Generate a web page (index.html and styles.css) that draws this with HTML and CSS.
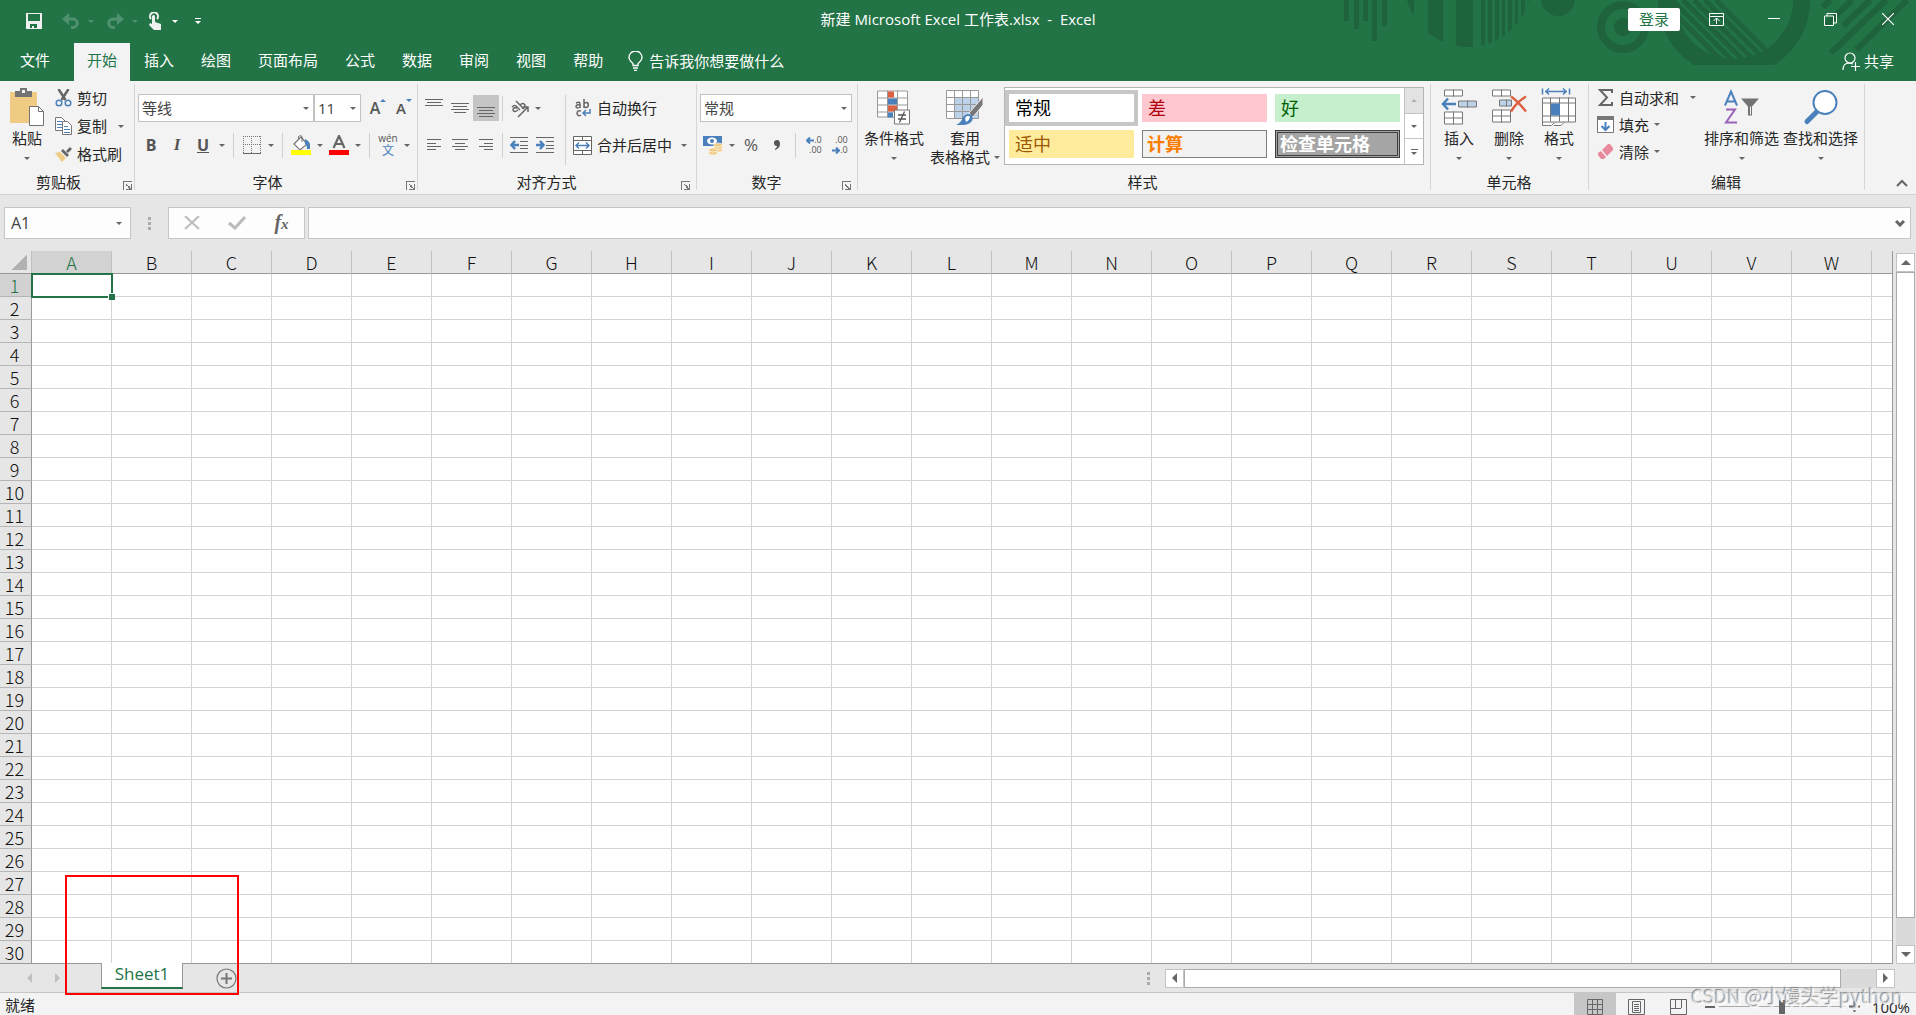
FILE: index.html
```html
<!DOCTYPE html>
<html lang="zh-CN">
<head>
<meta charset="utf-8">
<title>新建 Microsoft Excel 工作表.xlsx - Excel</title>
<link rel="stylesheet" href="styles.css">
</head>
<body>
<header class="top">
  <svg class="deco" width="596" height="81" viewBox="0 0 596 81" aria-hidden="true">
    <defs>
      <clipPath id="disc"><circle cx="148" cy="-16" r="63"/></clipPath>
      <clipPath id="bowl"><circle cx="414" cy="0" r="59"/></clipPath>
    </defs>
    <g fill="#1e633c">
      <path d="M24 0h5v21h-5zM34 0h5v29h-5zM43 0h5v21h-5zM52 0h5v41h-5zM62 0h5v26h-5z"/>
      <path clip-path="url(#disc)" d="M85 0h9v60h-9zM108 0h15v60h-15zM136 0h17v60h-17zM161 0h4v60h-4zM168 0h4v60h-4zM175 0h4v60h-4zM182 0h3v60h-3zM188 0h4v60h-4zM195 0h3v60h-3zM201 0h4v60h-4zM208 0h4v60h-4z"/>
      <circle cx="238" cy="-1" r="17"/>
      <circle cx="303" cy="27" r="22" fill="none" stroke="#1e633c" stroke-width="8"/>
      <circle cx="303" cy="27" r="9"/>
      <path d="M338 0a76 76 0 0 0 36 65h80a76 76 0 0 0 36-65h-17a59 59 0 0 1-118 0z"/>
    </g>
    <g stroke="#1e633c" fill="none">
      <path clip-path="url(#bowl)" stroke-width="5" d="M396 0l70 70M385 0l70 70M374 0l70 70M363 0l70 70M352 0l70 70M341 0l70 70"/>
      <path stroke-width="6" d="M503 7l7-7M505 26l27-26M523 26l27-26M511 53l55-53M536 50l51-50"/>
    </g>
  </svg>
  <div class="titlebar">
    <div class="qat">
      <button class="q save" aria-label="保存"><svg width="16" height="16" viewBox="0 0 16 16"><path fill="#f0f0f0" fill-rule="evenodd" d="M0 0h16v16H0zM2 1v7h12V1zM4 11v4h2v-2h2v2h3v-4z"/></svg></button>
      <button class="q dim" aria-label="撤消"><svg width="18" height="16" viewBox="0 0 18 16"><path fill="none" stroke="currentColor" stroke-width="3" d="M3 6h8a4 4 0 0 1 0 8.500H9"/><path fill="currentColor" d="M0 6l7-6v12z"/></svg></button>
      <button class="drop dim" aria-label="撤消列表"></button>
      <button class="q dim redo" aria-label="恢复"><svg width="18" height="16" viewBox="0 0 18 16"><path fill="none" stroke="currentColor" stroke-width="3" d="M15 6H7a4 4 0 0 0 0 8.500h2"/><path fill="currentColor" d="M18 6l-7-6v12z"/></svg></button>
      <button class="drop dim" aria-label="恢复列表"></button>
      <button class="q" aria-label="触摸模式"><svg width="14" height="18" viewBox="0 0 14 18"><path fill="none" stroke="#f0f0f0" stroke-width="2" d="M3 7a4 4 0 1 1 6 0"/><path fill="#f0f0f0" d="M4 4q2-2 3 0v6l6 2v6H6l-5-5 1-2 2 1z"/></svg></button>
      <button class="drop light" aria-label="触摸模式列表"></button>
      <button class="q custom" aria-label="自定义快速访问工具栏"><svg width="6" height="6" viewBox="0 0 6 6"><path fill="#fff" d="M0 0h6v1H0zM0 3h6L3 6z"/></svg></button>
    </div>
    <h1 class="doc-title">新建 Microsoft Excel 工作表.xlsx&nbsp; -&nbsp; Excel</h1>
    <div class="window-tools">
      <button class="login">登录</button>
      <button class="win" aria-label="功能区显示选项"><svg width="15" height="13" viewBox="0 0 15 13"><path fill="none" stroke="#fff" d="M.5.5h14v12H.5zM1 3.500h13M7.500 11V5M4.500 8l3-3 3 3"/></svg></button>
      <button class="win" aria-label="最小化"><svg width="12" height="12" viewBox="0 0 12 12"><path stroke="#fff" d="M0 5.500h12"/></svg></button>
      <button class="win" aria-label="还原"><svg width="13" height="13" viewBox="0 0 13 13"><path fill="none" stroke="#fff" d="M.5 3h9v9.500h-9zM3 3V.5h9.500V10H10"/></svg></button>
      <button class="win" aria-label="关闭"><svg width="12" height="12" viewBox="0 0 12 12"><path stroke="#fff" stroke-width="1.200" d="M0 0l12 12M12 0L0 12"/></svg></button>
    </div>
  </div>
  <nav class="tabs">
    <button class="tab file">文件</button>
    <button class="tab active">开始</button>
    <button class="tab">插入</button>
    <button class="tab">绘图</button>
    <button class="tab">页面布局</button>
    <button class="tab">公式</button>
    <button class="tab">数据</button>
    <button class="tab">审阅</button>
    <button class="tab">视图</button>
    <button class="tab">帮助</button>
    <button class="tell"><svg width="15" height="20" viewBox="0 0 15 20"><path fill="none" stroke="#fff" stroke-width="1.300" d="M5 14.500v-2Q1 9 1 6.500a6 6 0 0 1 13 0Q14 9 10 12.500v2zM5 17h5M6 19.300h3"/></svg>告诉我你想要做什么</button>
    <button class="share"><svg width="18" height="19" viewBox="0 0 18 19"><circle cx="8" cy="6" r="5" fill="none" stroke="#fff" stroke-width="1.200"/><path fill="none" stroke="#fff" stroke-width="1.200" d="M1 18c0-4 2-7 6-7l4 1M13.500 10v9M9 14.500h9"/></svg>共享</button>
  </nav>
</header>

<main class="ribbon">
  <section class="group clipboard">
    <div class="tools">
      <button class="big paste"><svg width="35" height="39" viewBox="0 0 35 39"><path fill="#f0cb83" d="M0 4h27v31H0z"/><path fill="#737373" d="M5 3h5V0h7v3h5v6H5z"/><path fill="#f3f3f3" d="M12 2h3v3h-3z"/><path fill="#fff" stroke="#737373" d="M19.500 18.500h9l5 5v14h-14z"/><path fill="none" stroke="#737373" d="M28.500 18.500v5h5"/></svg><span>粘贴</span><i class="caret"></i></button>
      <div class="list">
        <button class="line"><svg width="16" height="18" viewBox="0 0 16 18"><path stroke="#666" stroke-width="2.500" d="M3 0l7 11M13 0L6 11"/><circle cx="3.500" cy="14" r="2.800" fill="none" stroke="#4a80bb" stroke-width="1.500"/><circle cx="12.500" cy="14" r="2.800" fill="none" stroke="#4a80bb" stroke-width="1.500"/></svg>剪切</button>
        <button class="line"><svg width="17" height="18" viewBox="0 0 17 18"><path fill="#fff" stroke="#777" d="M.5.500h6l4 4v9H.5z"/><path stroke="#4a80bb" d="M2 4.500h5M2 7.500h5M2 10.500h5"/><path fill="#fff" stroke="#777" d="M7.500 4.500h5l4 4v9h-9z"/><path stroke="#4a80bb" d="M9 9.500h4M9 12.500h6M9 15.500h6"/></svg>复制<i class="caret far"></i></button>
        <button class="line"><svg width="17" height="15" viewBox="0 0 17 15"><path fill="#f0cb83" d="M0 6l5-1 6 6-4 4z"/><path fill="#666" d="M6 4l2-2 6 6-2 2zM11 4l4-4 2 2-4 4z"/></svg>格式刷</button>
      </div>
    </div>
    <footer class="cap launcher"><span>剪贴板</span><button class="launch" aria-label="剪贴板选项"></button></footer>
  </section>

  <section class="group fonts">
    <div class="tools stack">
      <div class="row">
        <label class="combo font"><select aria-label="字体"><option>等线</option></select></label>
        <label class="combo size"><select aria-label="字号"><option>11</option></select></label>
        <button class="tool grow" aria-label="增大字号"><b class="glyph">A</b><svg width="6" height="12" viewBox="0 0 6 12"><path fill="#4a80bb" d="M0 3h6L3 0z"/></svg></button>
        <button class="tool" aria-label="减小字号"><b class="glyph small">A</b><svg width="6" height="12" viewBox="0 0 6 12"><path fill="#4a80bb" d="M0 0h6L3 3z"/></svg></button>
      </div>
      <div class="row">
        <button class="tool fmt"><b>B</b></button>
        <button class="tool fmt"><em>I</em></button>
        <button class="tool fmt"><u>U</u></button>
        <button class="drop" aria-label="下划线选项"></button>
        <span class="sep"></span>
        <button class="tool" aria-label="边框"><svg width="18" height="18" viewBox="0 0 18 18"><path stroke="#777" stroke-dasharray="1 1" fill="none" d="M.5 0v17M8.500 0v17M17.500 0v17M0 .5h18M0 8.500h18"/><path stroke="#666" d="M0 17.500h18"/></svg></button>
        <button class="drop" aria-label="边框选项"></button>
        <span class="sep"></span>
        <button class="tool" aria-label="填充颜色"><svg width="20" height="20" viewBox="0 0 20 20"><path fill="#fff" stroke="#777" stroke-width="1.200" d="M3 9l7-7 6 7-7 6z"/><path fill="none" stroke="#777" d="M7.500 5V1.500q2-2 3.500 0V7"/><path fill="#4a80bb" d="M14 4q6 2 5 10h-3q0-4-2-5z"/><path fill="#ff0" d="M0 15h20v5H0z"/></svg></button>
        <button class="drop" aria-label="填充颜色选项"></button>
        <button class="tool" aria-label="字体颜色"><svg width="20" height="20" viewBox="0 0 20 20"><path fill="none" stroke="#666" stroke-width="2.200" d="M4.500 13L10 1l5.500 12M7 9h6"/><path fill="red" d="M0 15h20v5H0z"/></svg></button>
        <button class="drop" aria-label="字体颜色选项"></button>
        <span class="sep"></span>
        <button class="tool pinyin"><span>wén</span><span class="wen">文</span></button>
        <button class="drop" aria-label="拼音选项"></button>
      </div>
    </div>
    <footer class="cap launcher"><span>字体</span><button class="launch" aria-label="字体选项"></button></footer>
  </section>

  <section class="group">
    <div class="tools align">
      <div class="stack">
        <div class="row">
          <button class="tool" aria-label="顶端对齐"><svg width="18" height="18" viewBox="0 0 18 18"><path stroke="#666" d="M0 .5h18M2 3.500h14M0 6.500h18"/></svg></button>
          <button class="tool" aria-label="垂直居中"><svg width="18" height="18" viewBox="0 0 18 18"><path stroke="#666" d="M0 4.500h18M2 7.500h14M0 10.500h18M3 13.500h12"/></svg></button>
          <button class="tool pressed" aria-label="底端对齐"><svg width="18" height="18" viewBox="0 0 18 18"><path stroke="#666" d="M0 8.500h18M2 11.500h14M0 14.500h18M2 17.500h14"/></svg></button>
          <span class="sep tight"></span>
          <button class="tool" aria-label="方向"><svg width="19" height="19" viewBox="0 0 19 19"><g fill="none" stroke="#666" stroke-width="1.500"><path d="M2 8q3-3 5 0l3 3M7 9q-4-1-4 2 1 3 5 0M6 2l8 8M10 6q3-3 5 0 0 4-3 3"/><path d="M8 18L18 8M18 13V8h-5"/></g></svg></button>
          <button class="drop" aria-label="方向选项"></button>
        </div>
        <div class="row">
          <button class="tool" aria-label="左对齐"><svg width="14" height="12" viewBox="0 0 14 12"><path stroke="#666" d="M0 .5h14M0 4.500h9M0 7.500h14M0 10.500h9"/></svg></button>
          <button class="tool" aria-label="居中"><svg width="16" height="12" viewBox="0 0 16 12"><path stroke="#666" d="M0 .5h16M3 4.500h10M0 7.500h16M3 10.500h10"/></svg></button>
          <button class="tool" aria-label="右对齐"><svg width="14" height="12" viewBox="0 0 14 12"><path stroke="#666" d="M0 .5h14M5 4.500h9M0 7.500h14M5 10.500h9"/></svg></button>
          <span class="sep tight"></span>
          <button class="tool" aria-label="减少缩进"><svg width="18" height="16" viewBox="0 0 18 16"><path stroke="#666" d="M0 .5h18M10 4.500h8M10 8.500h8M10 11.500h8M0 15.500h18"/><path fill="none" stroke="#4a80bb" stroke-width="2.500" d="M9 8H2M5 4L1.500 8 5 12"/></svg></button>
          <button class="tool" aria-label="增加缩进"><svg width="18" height="16" viewBox="0 0 18 16"><path stroke="#666" d="M0 .5h18M10 4.500h8M10 8.500h8M10 11.500h8M0 15.500h18"/><path fill="none" stroke="#4a80bb" stroke-width="2.500" d="M0 8h7M4 4l3.500 4L4 12"/></svg></button>
        </div>
      </div>
      <span class="sep long"></span>
      <div class="stack">
        <button class="line wide"><svg width="19" height="18" viewBox="0 0 19 18"><g fill="none" stroke="#666" stroke-width="1.500"><path d="M3 4q4-2 4 1v4M7 6q-4-1-4 2 1 2 4 0M11 0v9M11 5q1-2 3-1.500 2 1 1 4-2 2-4 0M8 12q-4-1-4 2.500Q5 18 8 16"/></g><path fill="none" stroke="#4a80bb" stroke-width="1.500" d="M17 10v4h-6M13 11l-3 3 3 3"/></svg>自动换行</button>
        <button class="line wide"><svg width="19" height="19" viewBox="0 0 19 19"><path fill="#fff" stroke="#666" d="M.5.500h18v18H.5zM.5 4.500h18M.5 14.500h18M9.500 0v4M9.500 15v4"/><path fill="none" stroke="#4a80bb" stroke-width="1.500" d="M3 9.500h13M6 6.500l-3 3 3 3M13 6.500l3 3-3 3"/></svg>合并后居中<i class="caret far"></i></button>
      </div>
    </div>
    <footer class="cap launcher"><span>对齐方式</span><button class="launch" aria-label="对齐选项"></button></footer>
  </section>

  <section class="group">
    <div class="tools stack">
      <div class="row"><label class="combo number"><select aria-label="数字格式"><option>常规</option></select></label></div>
      <div class="row">
        <button class="tool" aria-label="会计数字格式"><svg width="20" height="19" viewBox="0 0 20 19"><path fill="#4a80bb" d="M0 0h19v10H0z"/><ellipse cx="9" cy="5" rx="5" ry="3.500" fill="#fff"/><circle cx="9" cy="5" r="2" fill="#4a80bb"/><g fill="#f0cb83" stroke="#fff" stroke-width=".6"><ellipse cx="15" cy="14" rx="4.500" ry="2"/><ellipse cx="15" cy="11.500" rx="4.500" ry="2"/><ellipse cx="15" cy="9" rx="4.500" ry="2"/><ellipse cx="10" cy="17" rx="4.500" ry="2"/><ellipse cx="10" cy="14" rx="4.500" ry="2"/></g></svg></button>
        <button class="drop" aria-label="会计格式选项"></button>
        <button class="tool percent">%</button>
        <button class="tool" aria-label="千位分隔样式"><svg width="6" height="10" viewBox="0 0 6 10"><path fill="#555" d="M3 0q3 0 3 4 0 4-5 6V9q2-1 2-3-3 0-3-3 0-3 3-3z"/></svg></button>
        <span class="sep"></span>
        <button class="tool" aria-label="增加小数位数"><span class="dec"><span><svg width="8" height="7" viewBox="0 0 8 7"><path fill="none" stroke="#4a80bb" stroke-width="2" d="M8 3.500H2M4 .500l-3 3 3 3"/></svg>.0</span><span>.00</span></span></button>
        <button class="tool" aria-label="减少小数位数"><span class="dec"><span>.00</span><span><svg width="8" height="7" viewBox="0 0 8 7"><path fill="none" stroke="#4a80bb" stroke-width="2" d="M0 3.500h6M4 .500l3 3-3 3"/></svg>.0</span></span></button>
      </div>
    </div>
    <footer class="cap launcher"><span>数字</span><button class="launch" aria-label="数字选项"></button></footer>
  </section>

  <section class="group styles">
    <div class="tools">
      <button class="big cond"><svg width="34" height="34" viewBox="0 0 34 34"><path fill="#fff" stroke="#999" d="M.5.500h30v26H.5zM10.500 0v27M20.500 0v27M0 7.500h31M0 14.500h31M0 21.500h31"/><path fill="#dc6141" d="M11 1h6v6h-6zM11 15h9v6h-9z"/><path fill="#4a80bb" d="M11 8h9v6h-9zM11 22h5v5h-5z"/><path fill="#fff" stroke="#777" d="M17.500 19.500h15v14h-15z"/><path fill="none" stroke="#555" stroke-width="1.300" d="M21 24.500h8M21 28.500h8M27.500 21l-5 11"/></svg><span>条件格式</span><i class="caret"></i></button>
      <button class="big tablefmt"><svg width="38" height="35" viewBox="0 0 38 35"><path fill="#fff" d="M0 0h33v28H0z"/><path fill="#bdd1e9" d="M8 7h25v21H8z"/><path fill="none" stroke="#999" d="M.5.500h32v28H.5zM8.500 0v28M16.500 0v28M24.500 0v28M0 7.500h33M0 14.500h33M0 21.500h33"/><path fill="#777" stroke="#f3f3f3" d="M37 7v8L27 27l-4-4z"/><path fill="#4a80bb" d="M10 35q5-2 7-8 4-5 9-2 3 8-8 10z"/><path fill="#fff" d="M19 28q3-4 5-1-1 4-4 5z"/></svg><span>套用</span><span class="second">表格格式<i class="caret"></i></span></button>
      <div class="gallery">
        <div class="swatches">
          <button class="sw normal">常规</button><button class="sw bad">差</button><button class="sw good">好</button>
          <button class="sw neutral">适中</button><button class="sw calc">计算</button><button class="sw check">检查单元格</button>
        </div>
        <div class="updown">
          <button class="off" aria-label="上一行"><i class="caret up"></i></button>
          <button aria-label="下一行"><i class="caret"></i></button>
          <button class="more" aria-label="其他样式"><i class="caret"></i></button>
        </div>
      </div>
    </div>
    <footer class="cap"><span>样式</span></footer>
  </section>

  <section class="group">
    <div class="tools cells">
      <button class="big"><svg width="36" height="36" viewBox="0 0 36 36"><g fill="#fff" stroke="#777"><path d="M3.500.500h18v6h-18zM12.500 0v7M3.500 22.500h18v12h-18zM12.500 22v13M3 28.500h19"/><path fill="#bdd1e9" d="M17.500 11.500h18v6h-18zM26.500 11v7"/></g><path fill="none" stroke="#4a80bb" stroke-width="2.500" d="M15 14.500H2M7 9l-5 5.500L7 20"/></svg><span>插入</span><i class="caret"></i></button>
      <button class="big"><svg width="36" height="36" viewBox="0 0 36 36"><g fill="#fff" stroke="#777"><path d="M1.500.500h18v6h-18zM10.500 0v7M1.500 20.500h18v12h-18zM10.500 20v13M1 26.500h19"/><path fill="#bdd1e9" d="M8.500 10.500h12v6h-12zM15.500 10v7"/></g><path fill="none" stroke="#dc6141" stroke-width="2.500" d="M20 7q6 4 15 15M35 7Q26 12 20 22"/></svg><span>删除</span><i class="caret"></i></button>
      <button class="big"><svg width="36" height="38" viewBox="0 0 36 38"><path fill="none" stroke="#4a80bb" stroke-width="1.500" d="M1.500 0v6M28.500 0v6M4 3h22M8 0L5 3l3 3M22 0l3 3-3 3"/><path fill="#fff" stroke="#777" d="M1.500 9.500h33v24h-33zM9.500 9v24M18.500 9v24M27.500 9v24M1 14.500h34M1 27.500h34M1.500 33v4h9l3-3M13 37h7l3-3"/><path fill="#4a80bb" d="M10 15h9v12h-9z"/></svg><span>格式</span><i class="caret"></i></button>
    </div>
    <footer class="cap"><span>单元格</span></footer>
  </section>

  <section class="group">
    <div class="tools">
      <div class="list edit">
        <button class="line"><svg width="17" height="17" viewBox="0 0 17 17"><path fill="none" stroke="#666" stroke-width="2" d="M15 4V1H3l7 7.500L3 16h12v-3"/></svg>自动求和<i class="caret far"></i></button>
        <button class="line"><svg width="17" height="17" viewBox="0 0 17 17"><path fill="#fff" stroke="#777" d="M.5.500h16v16H.5z"/><path fill="#777" d="M0 0h17v4H0z"/><path fill="none" stroke="#4a80bb" stroke-width="2" d="M8.500 6v8M4.500 10l4 4 4-4"/></svg>填充<i class="caret"></i></button>
        <button class="line"><svg width="17" height="16" viewBox="0 0 17 16"><path fill="#e98a9c" d="M5 6l6-6h2l3 4v2l-6 6zM4 7l5 6-2 2H4l-3-4v-2z"/></svg>清除<i class="caret"></i></button>
      </div>
      <button class="big sort"><svg width="36" height="34" viewBox="0 0 36 34"><path fill="none" stroke="#4a80bb" stroke-width="2" d="M1 15L7 1l6 14M3 11h8"/><path fill="none" stroke="#9b62b8" stroke-width="2" d="M2 19h9L2 32h11"/><path fill="#737373" d="M17 8h18l-7 8v9h-4v-9z"/><path stroke="#f3f3f3" d="M26.500 16v8"/></svg><span>排序和筛选</span><i class="caret"></i></button>
      <button class="big find"><svg width="36" height="36" viewBox="0 0 36 36"><path stroke="#4a80bb" stroke-width="5" stroke-linecap="round" d="M4 32l11-11"/><circle cx="22" cy="13" r="11.500" fill="#fff" stroke="#4a80bb" stroke-width="2"/></svg><span>查找和选择</span><i class="caret"></i></button>
    </div>
    <footer class="cap"><span>编辑</span></footer>
  </section>
  <button class="collapse" aria-label="折叠功能区"><svg width="12" height="8" viewBox="0 0 12 8"><path fill="none" stroke="#666" stroke-width="2" d="M1 7l5-5 5 5"/></svg></button>
</main>

<div class="formula">
  <label class="namebox"><input value="A1" aria-label="名称框"><i class="caret"></i></label>
  <span class="dots"></span>
  <div class="fx">
    <button aria-label="取消"><svg width="16" height="14" viewBox="0 0 16 14"><path stroke="#bbb" stroke-width="2" d="M1 0l14 13M15 0L1 13"/></svg></button>
    <button aria-label="输入"><svg width="18" height="14" viewBox="0 0 18 14"><path fill="none" stroke="#bbb" stroke-width="3" d="M1 7l6 5L17 1"/></svg></button>
    <button aria-label="插入函数"><em>f<small>x</small></em></button>
  </div>
  <label class="entry"><input aria-label="编辑栏"><svg width="10" height="7" viewBox="0 0 10 7"><path fill="none" stroke="#666" stroke-width="3" d="M1 1l4 4 4-4"/></svg></label>
</div>

<div class="work">
  <div class="sheet"><table class="grid" id="grid"></table></div>
  <div class="vbar">
    <button class="arrow" aria-label="向上滚动"><i class="tri up"></i></button>
    <div class="track"><div class="thumb"></div></div>
    <button class="arrow" aria-label="向下滚动"><i class="tri down"></i></button>
  </div>
</div>

<div class="sheetbar">
  <button class="nav" aria-label="上一个工作表"><i class="tri left"></i></button>
  <button class="nav" aria-label="下一个工作表"><i class="tri right"></i></button>
  <button class="sheet-tab">Sheet1</button>
  <button class="add" aria-label="新工作表"><svg width="21" height="21" viewBox="0 0 21 21"><circle cx="10.500" cy="10.500" r="9.500" fill="none" stroke="#777" stroke-width="1.200"/><path stroke="#777" stroke-width="2" d="M5 10.500h11M10.500 5v11"/></svg></button>
  <div class="hbar">
    <span class="dots"></span>
    <button class="arrow" aria-label="向左滚动"><i class="tri left"></i></button>
    <div class="track"><div class="thumb"></div></div>
    <button class="arrow" aria-label="向右滚动"><i class="tri right"></i></button>
  </div>
  <div class="mark"></div>
</div>

<footer class="status">
  <span class="ready">就绪</span>
  <button class="view on" aria-label="普通"><svg width="16" height="16" viewBox="0 0 16 16"><path fill="none" stroke="#666" d="M.5.500h15v15H.5zM5.500 0v16M10.500 0v16M0 5.500h16M0 10.500h16"/></svg></button>
  <button class="view" aria-label="页面布局"><svg width="17" height="16" viewBox="0 0 17 16"><path fill="none" stroke="#666" d="M.5.500h16v15H.5zM4.500 2.500h8v11h-8zM6 5.500h5M6 7.500h5M6 9.500h5M6 11.500h5"/></svg></button>
  <button class="view" aria-label="分页预览"><svg width="17" height="16" viewBox="0 0 17 16"><path fill="none" stroke="#666" d="M.5.500h16v15H.5zM5.500 0v9M11.500 0v9M0 9.500h11"/></svg></button>
  <div class="zoom">
    <button class="minus" aria-label="缩小"></button>
    <input type="range" min="0" max="200" value="100" aria-label="缩放">
    <button class="plus" aria-label="放大"><svg width="11" height="11" viewBox="0 0 11 11"><path stroke="#666" stroke-width="2" d="M0 5.500h11M5.500 0v11"/></svg></button>
    <span>100%</span>
  </div>
  <span class="watermark">CSDN @小馒头学python</span>
</footer>
<script src="grid.js"></script>
</body>
</html>
```
FILE: styles.css
```css
* { box-sizing: border-box; }
body {
  margin: 0;
  height: 100vh;
  display: flex;
  flex-direction: column;
  overflow: hidden;
  background: #e6e6e6;
  color: #262626;
  font: 15px/20px "Open Sans", "Noto Sans CJK SC", sans-serif;
}
button, input, select { font: inherit; color: inherit; margin: 0; }
button { border: 0; padding: 0; background: none; white-space: nowrap; }
svg { display: block; flex: none; }
i { display: block; flex: none; }

/* title bar and tabs */
.top { position: relative; background: #227447; color: #fff; flex: none; }
.deco { position: absolute; right: 0; top: 0; }
.titlebar { position: relative; display: grid; grid-template-columns: 1fr auto 1fr; height: 43px; padding-bottom: 5px; align-items: center; }
.qat { display: flex; align-items: center; height: 38px; padding: 4px 0 0 20px; }
.q { width: 28px; height: 24px; display: flex; align-items: center; justify-content: center; }
.q.save { margin-right: 9px; }
.q.redo { margin-left: 4px; }
.q.custom { margin-left: 3px; }
.dim { color: #4f9170; }
.doc-title { margin: 0; font: 15px/20px "Open Sans", "Noto Sans CJK SC", sans-serif; white-space: pre; }
.window-tools { display: flex; justify-content: flex-end; align-items: center; }
.login { width: 52px; height: 23px; margin-right: 8px; background: #fff; color: #227447; border-radius: 2px; line-height: 20px; }
.win { width: 57px; height: 30px; display: flex; align-items: center; justify-content: center; }
.tabs { position: relative; display: flex; height: 38px; gap: 1px; }
.tab { padding: 0 13px 4px; }
.tab.file { width: 73px; padding: 0 17px 4px 14px; }
.tab.active { background: #f3f3f3; color: #227447; }
.tell, .share { display: flex; align-items: center; gap: 6px; padding-bottom: 2px; }
.tell { margin-left: 11px; }
.share { margin: 0 22px 0 auto; gap: 4px; }

/* ribbon */
.ribbon { display: flex; height: 114px; flex: none; background: #f3f3f3; border-bottom: 1px solid #d2d2d2; padding: 3px 0 4px; }
.group { display: flex; flex-direction: column; justify-content: space-between; border-right: 1px solid #d5d5d5; padding: 0 4px 0 3px; flex: none; }
.group.clipboard { width: 135px; padding-right: 0; }
.group.fonts { padding-right: 0; }
.tools { display: flex; height: 85px; }
.cap { display: flex; align-items: center; justify-content: center; height: 17px; position: relative; }
.cap.launcher { padding-right: 20px; }
.launch { position: absolute; right: 2px; bottom: 0; width: 9px; height: 9px; border: solid #777; border-width: 1px 0 0 1px; }
.launch::after { content: ""; position: absolute; right: 0; bottom: 0; border: solid #777; border-width: 0 1px 1px 0; width: 5px; height: 5px; background: linear-gradient(45deg, transparent 40%, #777 40%, #777 60%, transparent 60%); }
.caret, .drop::after { content: ""; display: block; width: 0; height: 0; border: solid transparent; border-width: 3px 3px 0; border-top-color: #666; }
.drop { width: 12px; height: 28px; display: flex; align-items: center; justify-content: center; }
.drop.dim::after { border-top-color: #4f9170; }
.drop.light::after { border-top-color: #fff; }
.big { display: flex; flex-direction: column; align-items: center; padding-top: 4px; }
.big svg { height: 39px; margin-bottom: 1px; }
.big span { height: 20px; }
.big > .caret { margin-top: 9px; }
.paste { width: 48px; }
.list { display: flex; flex-direction: column; }
.line { display: flex; align-items: center; gap: 5px; height: 28px; }
.line svg { width: 17px; }
.list .line { padding-left: 4px; }
.far { margin: 0 5px 0 6px; }
.stack { display: flex; flex-direction: column; gap: 9px; padding-top: 10px; justify-content: flex-start; }
.row { display: flex; height: 28px; align-items: center; }
.combo { position: relative; display: block; height: 28px; }
.combo select { appearance: none; width: 100%; height: 28px; border: 1px solid #c3c3c3; border-radius: 0; background: #fff; padding: 0 3px; color: #444; }
.combo::after { content: ""; position: absolute; right: 5px; top: 13px; border: solid transparent; border-width: 3px 3px 0; border-top-color: #666; }
.font { width: 176px; }
.size { width: 47px; }
.number { width: 152px; }
.tool { width: 26px; height: 26px; display: flex; align-items: center; justify-content: center; color: #555; }
.grow { margin-left: 4px; }
.glyph { font: 600 16px/20px "Open Sans", sans-serif; }
.glyph.small { font-size: 15px; }
.tool .glyph + svg { align-self: flex-start; margin-top: 4px; }
.fmt { font: 16px/20px "Open Sans", sans-serif; }
.fmt em { font: italic bold 17px/20px "Liberation Serif", serif; }
.fmt u { font-weight: bold; }
.sep { width: 1px; height: 25px; margin: 0 5px; background: #d0d0d0; }
.sep.tight { margin: 0 3px; }
.sep.long { height: 70px; margin: 11px 5px 0 7px; }
.pinyin { flex-direction: column; font-size: 10px; line-height: 11px; }
.wen { color: #4a80bb; font-size: 12px; line-height: 13px; }
.pressed { background: #c5c5c5; }
.wide { padding-left: 2px; }
.wide svg { width: 19px; }
.align .far { margin: 0 5px 0 4px; }
.percent { font-size: 17px; }
.dec { font-size: 9px; line-height: 10px; display: flex; flex-direction: column; align-items: flex-end; }
.dec span { display: flex; align-items: center; }

/* cell styles gallery */
.styles { flex: 1; padding-right: 6px; }
.cond { width: 66px; }
.tablefmt { width: 74px; margin: 0 2px 0 1px; }
.tablefmt .second { display: flex; align-items: center; height: 18px; gap: 4px; }
.gallery { flex: 1; display: flex; height: 78px; margin-top: 3px; border: 1px solid #b5b5b5; background: #fff; }
.swatches { flex: 1; display: grid; grid-template-columns: repeat(3, 1fr); grid-auto-rows: 28px; gap: 8px; padding: 6px 4px; }
.sw { text-align: left; padding: 0 6px; font-size: 18px; line-height: 26px; }
.normal { outline: 4px solid #c6c6c6; color: #000; }
.bad { background: #ffc7ce; color: #b00010; }
.good { background: #c6efce; color: #006100; }
.neutral { background: #ffeb9c; color: #9c5700; }
.calc { background: #f2f2f2; color: #fa7d00; border: 1px solid #7f7f7f; font-weight: bold; padding: 0 4px; }
.check { background: #a5a5a5; color: #fff; border: 3px double #3f3f3f; font-weight: bold; padding: 0 2px; line-height: 22px; }
.updown { width: 19px; display: flex; flex-direction: column; border-left: 1px solid #c3c3c3; }
.updown button { flex: 1; display: flex; flex-direction: column; align-items: center; justify-content: center; gap: 2px; }
.updown button + button { border-top: 1px solid #c3c3c3; }
.updown .off { background: #e3e3e3; }
.caret.up { transform: rotate(180deg); opacity: .4; }
.more::before { content: ""; width: 7px; height: 1px; background: #666; }
.cells .big { width: 50px; }
.edit { width: 110px; }
.edit .line { height: 27px; padding-left: 5px; }
.sort, .find { width: 79px; }
.collapse { margin: 0 8px 3px 31px; align-self: flex-end; }

/* formula bar */
.formula { flex: none; display: flex; align-items: center; height: 56px; padding: 12px 5px 12px 4px; }
.namebox, .fx, .entry { height: 32px; background: #fdfdfd; border: 1px solid #c6c6c6; display: flex; align-items: center; }
.namebox { width: 127px; padding-right: 8px; }
.namebox input { flex: 1; min-width: 0; border: 0; background: none; padding: 0 6px; color: #444; font-size: 16px; }
.dots { width: 3px; height: 13px; background: repeating-linear-gradient(#aaa 0 3px, transparent 3px 5px); }
.formula .dots { margin: 0 17px; }
.fx { width: 137px; }
.fx button { flex: 1; height: 30px; display: flex; align-items: center; justify-content: center; }
.fx em { font: italic bold 20px/24px "Liberation Serif", serif; color: #666; }
.fx small { font-size: 15px; }
.entry { flex: 1; margin-left: 3px; padding-right: 5px; }
.entry input { flex: 1; min-width: 0; border: 0; background: none; }

/* worksheet */
.work { flex: 1; min-height: 0; display: flex; }
.sheet { flex: 1; min-width: 0; overflow: clip; overflow-clip-margin: 4px; background: #fff; border-right: 1px solid #999; border-bottom: 1px solid #999; }
.grid { width: 100%; table-layout: fixed; border-collapse: separate; border-spacing: 0; font: 18px/20px "Noto Sans CJK SC", sans-serif; color: #111; }
.grid col.num { width: 32px; }
.grid col.std { width: 80px; }
.grid th, .grid td { height: 23px; padding: 0; border: solid #d4d4d4; border-width: 0 1px 1px 0; }
.grid tr > :last-child { border-right: 0; }
.grid tbody tr:last-child > * { height: 22px; border-bottom: 0; }
.grid th { background: #e6e6e6; font-weight: 300; border-color: #999 #c0c0c0 #999 #999; }
.grid tbody th { border-color: #b5b5b5 #999 #b5b5b5; padding-right: 2px; }
.grid thead th.cur, .grid tbody th.cur { background: #d2d2d2; color: #227447; }
.corner::after { content: ""; display: block; margin: 0 4px 0 auto; width: 15px; height: 15px; background: linear-gradient(135deg, transparent 50%, #b2b2b2 50%); }
.grid td.sel { outline: 2px solid #227447; outline-offset: -1px; position: relative; }
.sel::after { content: ""; position: absolute; right: -4px; bottom: -4px; width: 6px; height: 6px; background: #227447; border: solid #fff; border-width: 1px 0 0 1px; }
.arrow { flex: none; width: 19px; height: 19px; display: flex; align-items: center; justify-content: center; background: #fff; border: 1px solid #c3c3c3; }
.tri { width: 0; height: 0; border: 5px solid transparent; color: #666; }
.tri.up { border-top: 0; border-bottom-color: currentColor; }
.tri.down { border-bottom: 0; border-top-color: currentColor; }
.tri.left { border-left: 0; border-right-color: currentColor; }
.tri.right { border-right: 0; border-left-color: currentColor; }
.vbar { flex: none; width: 23px; display: flex; flex-direction: column; padding: 2px 1px 0 3px; }
.track { flex: 1; background: #dadada; display: flex; }
.vbar .track { flex-direction: column; }
.thumb { background: #fff; border: 1px solid #ababab; }
.vbar .thumb { height: 96%; }
.hbar .thumb { width: 95%; }

/* sheet tabs */
.sheetbar { position: relative; flex: none; height: 29px; display: flex; border-bottom: 1px solid #c6c6c6; padding-left: 15px; }
.nav { width: 28px; display: flex; align-items: center; justify-content: center; }
.nav .tri { color: #c0c0c0; }
.sheet-tab { width: 82px; height: 26px; margin: -1px 0 0 30px; padding-bottom: 3px; background: #fff; color: #227447; border: solid #999; border-width: 0 1px; border-bottom: 2px solid #227447; font-size: 17px; line-height: 20px; }
.add { margin-left: 33px; }
.hbar { margin-left: auto; width: 769px; max-width: 50%; display: flex; align-items: center; padding-right: 21px; }
.hbar .dots { margin-right: 15px; }
.hbar .track { height: 19px; }
.mark { position: absolute; left: 65px; bottom: -3px; width: 174px; height: 120px; border: 2px solid #f00; pointer-events: none; z-index: 2; }

/* status bar */
.status { position: relative; flex: none; height: 22px; display: flex; background: #f3f3f3; align-items: stretch; padding-right: 6px; }
.ready { margin: 2px auto 0 5px; }
.view { width: 42px; height: 22px; display: flex; align-items: center; justify-content: center; padding-top: 5px; }
.view.on { background: #c6c6c6; }
.zoom { display: flex; align-items: center; padding-top: 5px; }
.minus { width: 10px; height: 2px; margin-left: 5px; background: #666; }
.zoom input { appearance: none; width: 126px; height: 14px; margin: 0 4px; background: linear-gradient(#aaa, #aaa) center / 100% 1px no-repeat; }
.zoom input::-webkit-slider-thumb { appearance: none; width: 6px; height: 14px; background: #666; }
.zoom span { margin-left: 12px; line-height: 18px; }
.watermark { position: absolute; right: 13px; top: -9px; font: 19px/24px "Noto Sans CJK SC", sans-serif; color: rgba(235, 235, 235, .8); text-shadow: -1px -1px 1px #888, 1px 1px 0 #fff; white-space: nowrap; pointer-events: none; }
```
FILE: grid.js
```js
const letters = "ABCDEFGHIJKLMNOPQRSTUVW".split("");
const rowCount = 30;
const table = document.getElementById("grid");

const cols = '<colgroup><col class="num">' + '<col class="std">'.repeat(letters.length) + "<col></colgroup>";
const heads = letters
  .map((name, i) => `<th scope="col"${i === 0 ? ' class="cur"' : ""}>${name}</th>`)
  .join("");

let body = "";
for (let r = 1; r <= rowCount; r++) {
  const first = r === 1;
  body += `<tr><th scope="row"${first ? ' class="cur"' : ""}>${r}</th>`;
  body += `<td${first ? ' class="sel"' : ""}></td>` + "<td></td>".repeat(letters.length) + "</tr>";
}

table.innerHTML = `${cols}<thead><tr><th class="corner"></th>${heads}<th></th></tr></thead><tbody>${body}</tbody>`;
```
